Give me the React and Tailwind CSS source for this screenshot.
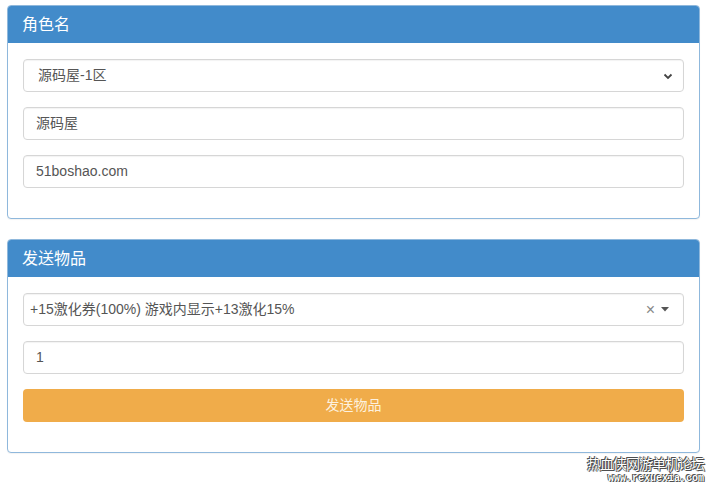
import React from 'react';

const FONT = { fontFamily: '"Liberation Sans", "Noto Sans CJK SC", sans-serif' };

function Panel({ title, children }) {
  return (
    <div className="border border-[#8fb8dc] rounded-[4px] overflow-hidden bg-white shadow-[0_1px_1px_rgba(0,0,0,0.05)]">
      <div className="h-[37px] flex items-center px-[14px] bg-[#428bca] text-white text-[16px]">{title}</div>
      <div className="pt-[16px] px-[15px] pb-[15px]">{children}</div>
    </div>
  );
}

function Field({ children, className = '' }) {
  return (
    <div
      className={`h-[33px] mb-[15px] flex items-center border border-[#d6d6d6] rounded-[4px] bg-white text-[14px] text-[#555] shadow-[inset_0_1px_1px_rgba(0,0,0,0.05)] ${className}`}
    >
      {children}
    </div>
  );
}

export default function App() {
  return (
    <div className="relative w-[714px] h-[488px] bg-white pl-[7px] pr-[14px] pt-[5px]" style={FONT}>
      <Panel title="角色名">
        <Field className="pl-[14px] pr-[10px] justify-between">
          <span>源码屋-1区</span>
          <svg width="10" height="8" viewBox="0 0 10 8" className="text-[#444]">
            <path d="M1.5 2.5 L5 6 L8.5 2.5" fill="none" stroke="currentColor" strokeWidth="1.8" />
          </svg>
        </Field>
        <Field className="px-[12px]">源码屋</Field>
        <Field className="px-[12px]">51boshao.com</Field>
      </Panel>

      <div className="h-[20px]" />

      <Panel title="发送物品">
        <Field className="pl-[6px] pr-[14px] justify-between text-[#444]">
          <span>+15激化券(100%) 游戏内显示+13激化15%</span>
          <span className="flex items-center gap-[6px]">
            <span className="text-[#888] text-[16px] leading-none">×</span>
            <svg width="8" height="5" viewBox="0 0 8 5">
              <path d="M0 0 L8 0 L4 4.5 Z" fill="#555" />
            </svg>
          </span>
        </Field>
        <Field className="px-[12px]">1</Field>
        <div className="h-[33px] mb-[15px] flex items-center justify-center rounded-[4px] bg-[#f0ac4a] text-[14px] text-[#fdf1de]">
          发送物品
        </div>
      </Panel>

      <div
        className="absolute right-[10px] bottom-[4px] flex flex-col items-end leading-none text-white"
        style={{ textShadow: '0 0 1px #333, 0 0 1px #333, 1px 1px 0 #555, -1px -1px 0 #555' }}
      >
        <span className="text-[14px] tracking-[-1px]">热血侠网游单机论坛</span>
        <span className="mt-[3px] text-[10px] font-bold" style={{ fontFamily: '"Liberation Mono", monospace' }}>
          www.rexuexia.com
        </span>
      </div>
    </div>
  );
}
